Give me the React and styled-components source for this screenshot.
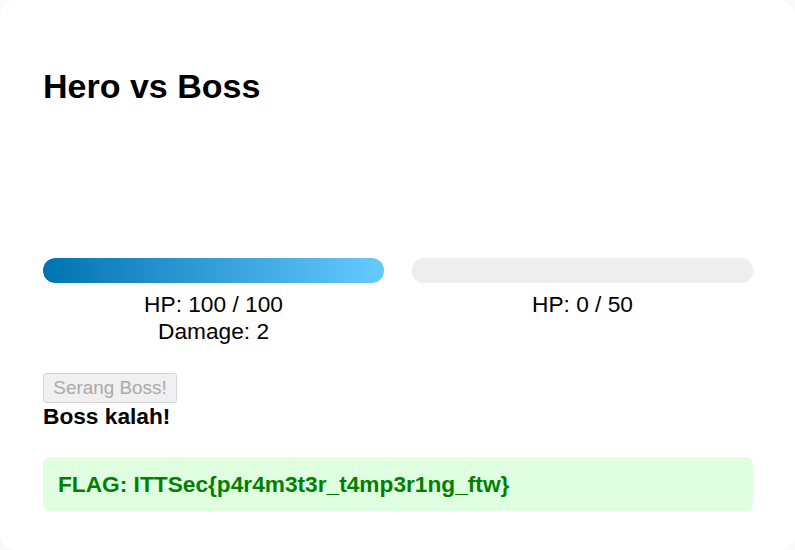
import React from 'react';
import styled, { createGlobalStyle } from 'styled-components';

const GlobalStyle = createGlobalStyle`
  html, body {
    margin: 0;
    padding: 0;
    background: #f9f9f9;
  }
  body {
    font-family: "Liberation Sans", Arial, sans-serif;
    color: #000;
  }
`

const hero = { hp: 100, maxHp: 100, damage: 2 };
const boss = { hp: 0, maxHp: 50 };

const App = () => {
  return (
    <>
      <GlobalStyle />
      <Card>
        <Title>Hero vs Boss</Title>
        <Arena>
          <Fighter>
            <Bar>
              <Fill style={{ width: `${(hero.hp / hero.maxHp) * 100}%` }} />
            </Bar>
            <Stats>
              HP: {hero.hp} / {hero.maxHp}<br />
              Damage: {hero.damage}
            </Stats>
          </Fighter>
          <Fighter>
            <Bar>
              <Fill style={{ width: `${(boss.hp / boss.maxHp) * 100}%` }} />
            </Bar>
            <Stats>HP: {boss.hp} / {boss.maxHp}</Stats>
          </Fighter>
        </Arena>
        <AttackButton disabled>Serang Boss!</AttackButton>
        <Status>Boss kalah!</Status>
        <Flag>FLAG: ITTSec{'{'}p4r4m3t3r_t4mp3r1ng_ftw{'}'}</Flag>
      </Card>
    </>
  );
};

export default App;

const Card = styled.div`
  box-sizing: border-box;
  min-height: 550px;
  background: #fff;
  border-radius: 16px;
  padding: 43px 42px 30px 43px;
`
const Title = styled.h1`
  margin: 24px 0 0;
  font-size: 34px;
  font-weight: bold;
  line-height: 39px;
`
const Arena = styled.div`
  display: grid;
  grid-template-columns: 1fr 1fr;
  column-gap: 28px;
  margin-top: 152px;
`
const Fighter = styled.div`
  display: flex;
  flex-direction: column;
`
const Bar = styled.div`
  height: 25px;
  border-radius: 12px;
  background: #eeeeee;
  overflow: hidden;
`
const Fill = styled.div`
  height: 100%;
  border-radius: 12px;
  background: linear-gradient(90deg, #0073b3, #66caff);
`
const Stats = styled.div`
  margin-top: 8px;
  text-align: center;
  font-size: 22.7px;
  line-height: 27px;
`
const AttackButton = styled.button`
  display: block;
  box-sizing: border-box;
  margin-top: 28px;
  width: 134px;
  height: 30px;
  padding: 0;
  font-family: "Liberation Sans", Arial, sans-serif;
  font-size: 18.9px;
  color: #aaaaaa;
  background: #f0f0f0;
  border: 1px solid #d4d4d4;
  border-radius: 3px;
`
const Status = styled.div`
  font-size: 22.7px;
  font-weight: bold;
  line-height: 27px;
`
const Flag = styled.div`
  margin-top: 27px;
  padding: 14px 15px;
  background: #e0ffe0;
  border-radius: 8px;
  color: #008000;
  font-size: 22.7px;
  font-weight: bold;
  line-height: 26px;
`
